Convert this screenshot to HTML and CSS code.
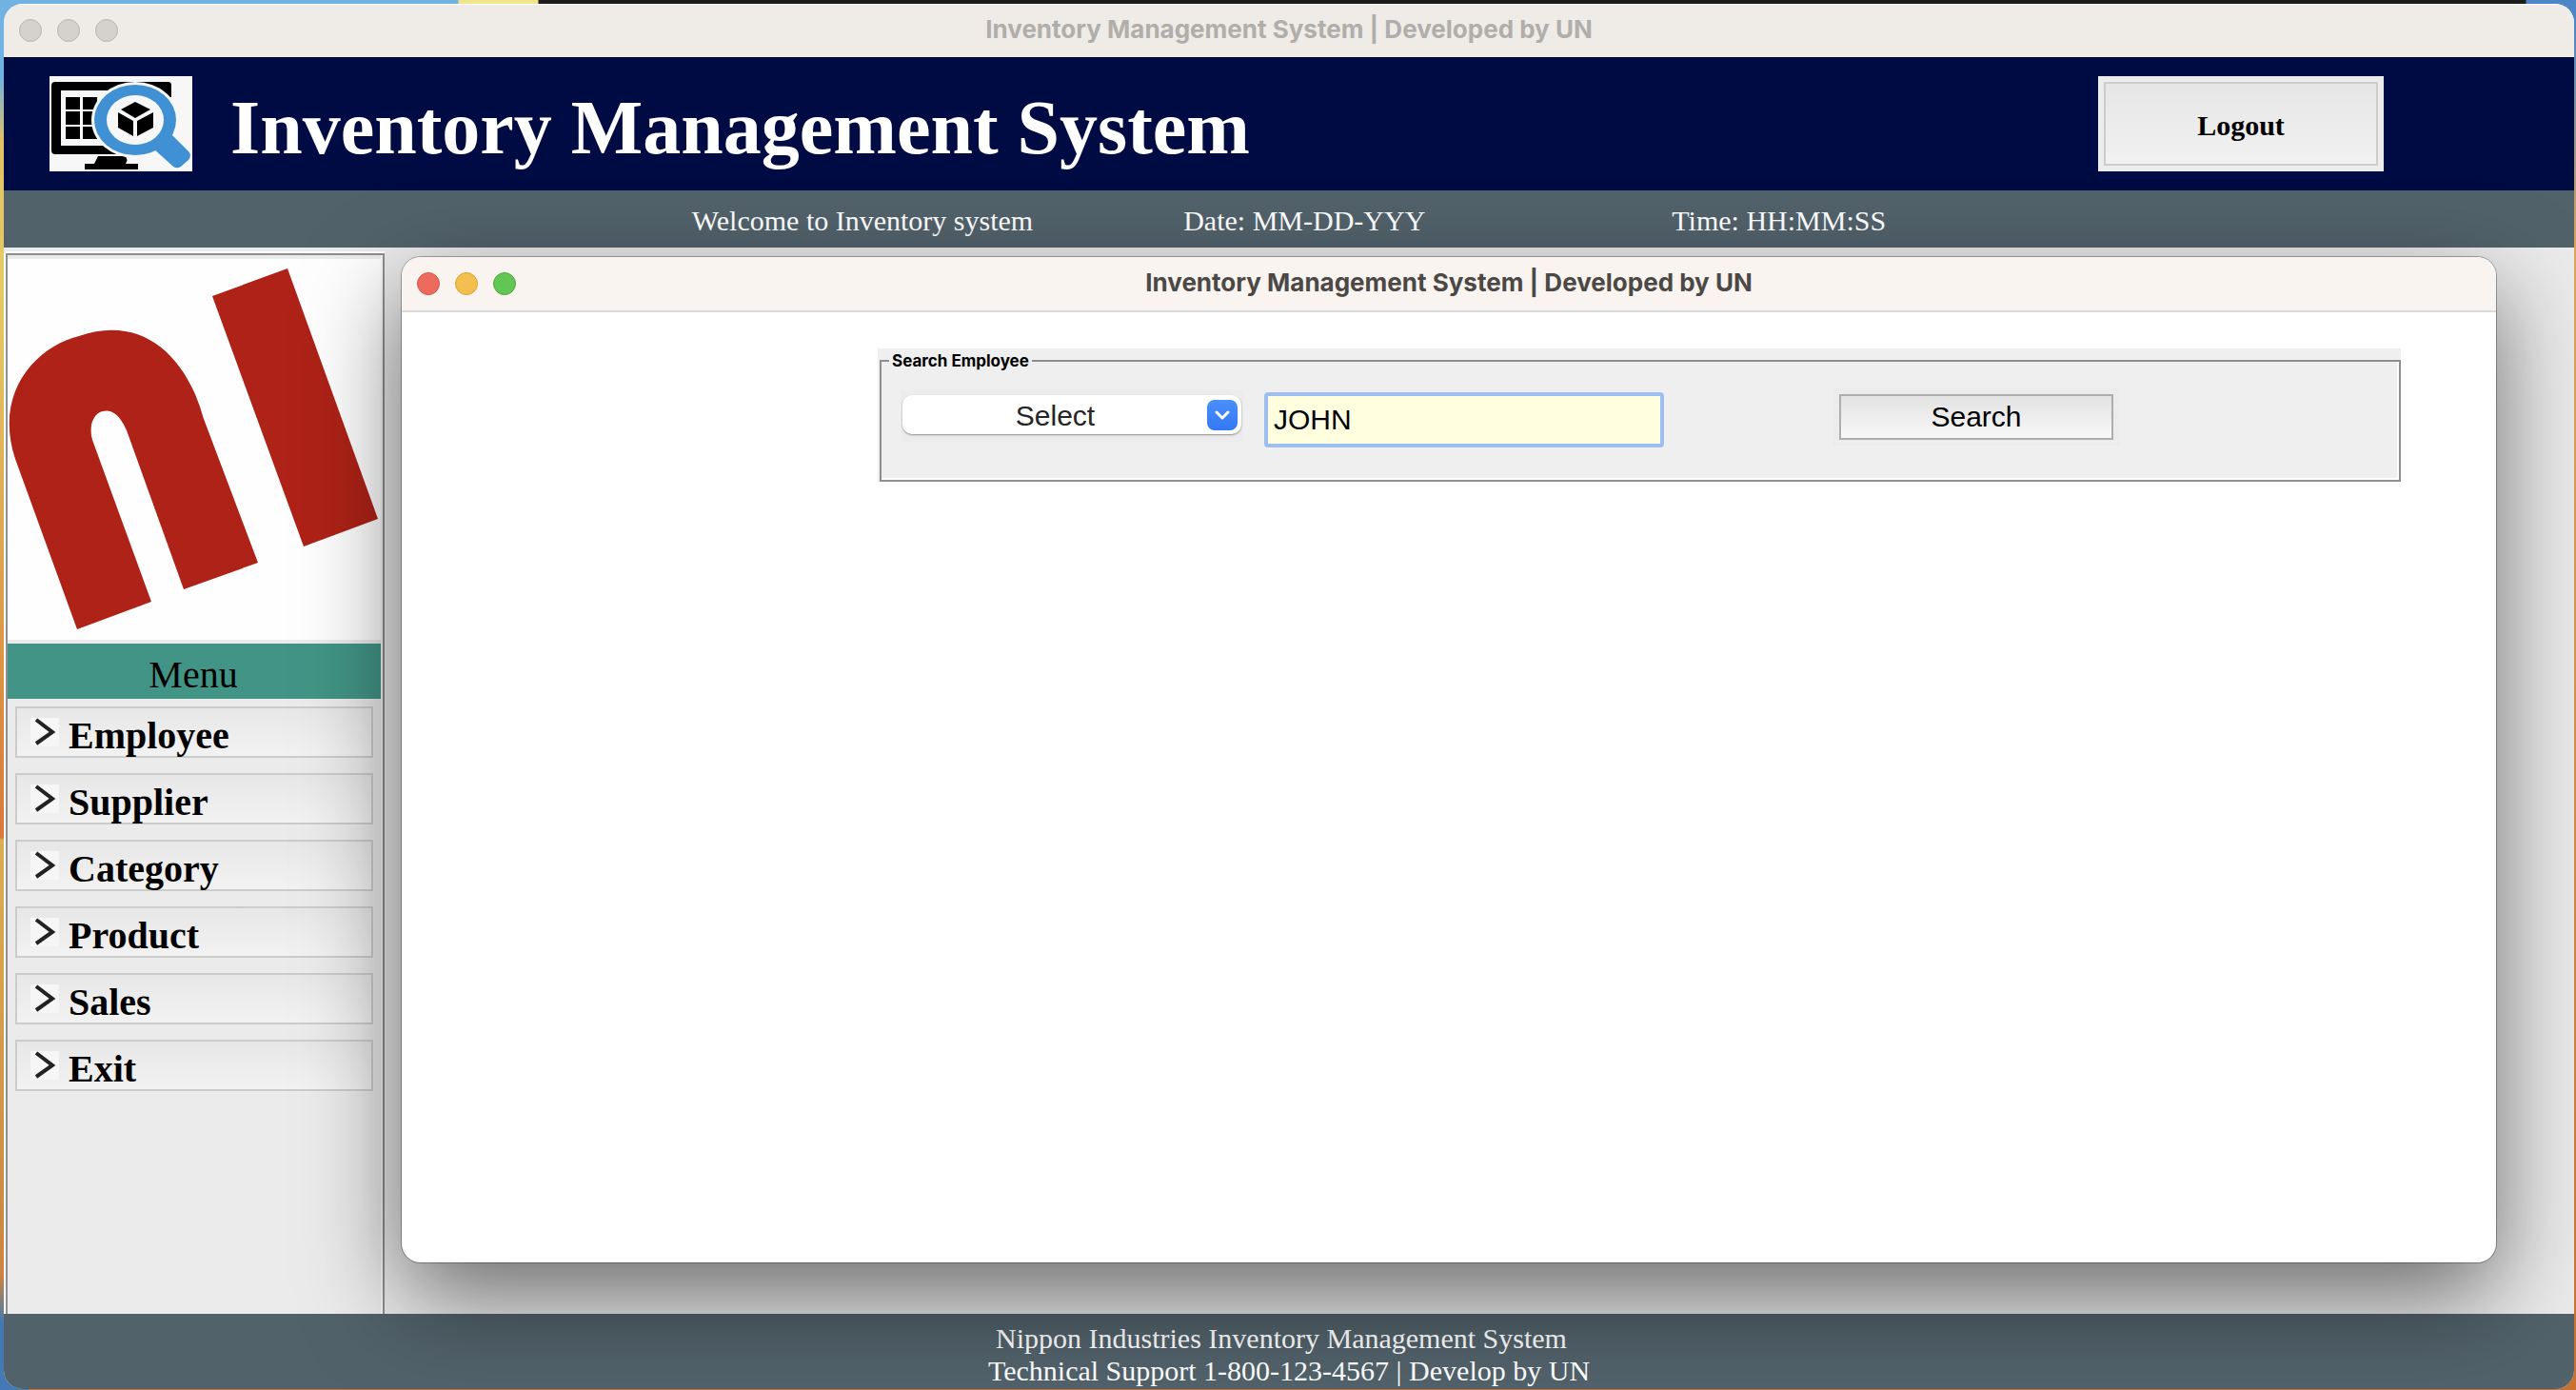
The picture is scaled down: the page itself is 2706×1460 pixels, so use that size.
FILE: index.html
```html
<!DOCTYPE html>
<html lang="en">
<head>
<meta charset="utf-8">
<title>Inventory Management System | Developed by UN</title>
<link rel="stylesheet" href="styles.css">
</head>
<body>
<div class="wallpaper"></div>
<div class="window">
  <div class="titlebar titlebar-inactive">
    <div class="lights"><span class="light"></span><span class="light"></span><span class="light"></span></div>
    <div class="titlebar-text">Inventory Management System | Developed by UN</div>
  </div>
  <header class="header">
    <svg class="header-logo" viewBox="0 0 150 100" aria-hidden="true">
      <rect width="150" height="100" fill="#f7f7f7"/>
      <rect x="2" y="6" width="126" height="76" rx="4"/>
      <rect x="12" y="15" width="106" height="58" fill="#f7f7f7"/>
      <path d="M17 22h15v13H17zM35 22h15v13H35zM17 37h15v14H17zM35 37h15v14H35zM17 53h15v13H17zM35 53h15v13H35z"/>
      <path d="M51 84h29l3 8h10v6H37v-6h10z"/>
      <path d="M112 22h18v70H80z" fill="#f7f7f7"/>
      <ellipse cx="90" cy="46" rx="46" ry="40" fill="#f7f7f7"/>
      <path d="M100 6h24q4 0 4 4v12L118 12z"/>
      <ellipse cx="90" cy="46" rx="45" ry="39" fill="#f7f7f7"/>
      <path d="M128 61L146 79Q150 83 146 88L138 95Q133 98 129 94L109 76z" fill="#4091d4"/>
      <ellipse cx="90" cy="46" rx="43" ry="37" fill="#4091d4"/>
      <ellipse cx="90" cy="46" rx="30" ry="26" fill="#f7f7f7"/>
      <path d="M90 27l16 8-16 9-15-9zM72 38l16 9v16l-16-9zM109 38L92 47v16l17-9z"/>
    </svg>
    <h1 class="header-title">Inventory Management System</h1>
    <button class="tk-button logout" type="button"><span class="tk-face">Logout</span></button>
  </header>
  <div class="clock">
    <span>Welcome to Inventory system</span>
    <span class="clock-date">Date: MM-DD-YYY</span>
    <span>Time: HH:MM:SS</span>
  </div>
  <div class="workspace">
    <nav class="sidebar">
      <div class="brand">
        <svg class="brand-logo" viewBox="0 0 392 400" preserveAspectRatio="none" aria-hidden="true">
          <path fill="#ae2217" d="M215 39L294 10L389 273L311 302zM73 389L8 210C-15 140 30 92 75 81C130 62 173 88 197 142Q202 154 206 168L263 319L185 347L125 180C115 157 104 159 100 160C90 162 85 175 89 190L151 360z"/>
        </svg>
      </div>
      <div class="menu-title">Menu</div>
      <ul class="menu">
        <li><button class="menu-item" type="button"><svg class="chevron" viewBox="0 0 30 30" aria-hidden="true"><path d="M6 2L23 15L6 27"/></svg>Employee</button></li>
        <li><button class="menu-item" type="button"><svg class="chevron" viewBox="0 0 30 30" aria-hidden="true"><path d="M6 2L23 15L6 27"/></svg>Supplier</button></li>
        <li><button class="menu-item" type="button"><svg class="chevron" viewBox="0 0 30 30" aria-hidden="true"><path d="M6 2L23 15L6 27"/></svg>Category</button></li>
        <li><button class="menu-item" type="button"><svg class="chevron" viewBox="0 0 30 30" aria-hidden="true"><path d="M6 2L23 15L6 27"/></svg>Product</button></li>
        <li><button class="menu-item" type="button"><svg class="chevron" viewBox="0 0 30 30" aria-hidden="true"><path d="M6 2L23 15L6 27"/></svg>Sales</button></li>
        <li><button class="menu-item" type="button"><svg class="chevron" viewBox="0 0 30 30" aria-hidden="true"><path d="M6 2L23 15L6 27"/></svg>Exit</button></li>
      </ul>
    </nav>
    <section class="dialog">
      <div class="titlebar titlebar-active">
        <div class="lights"><span class="light red"></span><span class="light yellow"></span><span class="light green"></span></div>
        <div class="titlebar-text">Inventory Management System | Developed by UN</div>
      </div>
      <form class="search">
        <fieldset class="search-frame">
          <legend>Search Employee</legend>
          <div class="search-row">
            <div class="select-wrap">
              <select class="search-by" aria-label="Search by"><option>Select</option></select>
              <svg class="select-arrow" viewBox="0 0 32 32" aria-hidden="true"><path d="M10 13L16 19L22 13"/></svg>
            </div>
            <input class="search-text" type="text" value="JOHN" aria-label="Search text">
            <button class="tk-button search-button" type="button"><span class="tk-face">Search</span></button>
          </div>
        </fieldset>
      </form>
    </section>
  </div>
  <footer class="footer">
    <div class="footer-company">Nippon Industries Inventory Management System</div>
    <div>Technical Support 1-800-123-4567 | Develop by UN</div>
  </footer>
</div>
</body>
</html>
```
FILE: styles.css
```css
* { box-sizing: border-box; }
body {
  margin: 0;
  min-height: 100vh;
  padding: 4px 2px 1px 4px;
  display: flex;
  position: relative;
  font-family: "Liberation Serif", "Times New Roman", serif;
  font-size: 30px;
  color: #000;
  background: linear-gradient(#4d86c6 0, #4d86c6 30px, #dca456 260px, #c8702f 100%);
}
/* desktop showing behind the window */
.wallpaper {
  position: absolute;
  inset: 0;
  background:
    linear-gradient(90deg, #70b2e2 0, #70b2e2 481px, #f0e48c 482px, #f0e48c 565px, #1c1c1c 566px, #1c1c1c calc(100% - 53px), #4d86c6 calc(100% - 52px)) 0 0 / 100% 5px no-repeat,
    linear-gradient(#70b2e2 0, #70b2e2 80px, #e2c264 150px, #e5cb66 300px, #dc9442 700px, #d9783a 880px, #dcae50 882px, #cc8440 1340px, #4379b4 1390px) 0 0 / 30px 100% no-repeat;
}
.window {
  position: relative;
  flex: 1;
  display: flex;
  flex-direction: column;
  background: #ebebeb;
  border-radius: 20px;
  overflow: hidden;
}
.titlebar {
  position: relative;
  display: flex;
  align-items: center;
  justify-content: center;
  font: bold 26px/32px Inter, "Noto Sans", sans-serif;
}
.titlebar-text { padding-bottom: 2px; }
.titlebar-inactive {
  height: 56px;
  color: #b0aeab;
  background: #efebe6;
  box-shadow: inset 0 1px #fff;
}
.titlebar-active {
  height: 58px;
  color: #4b4846;
  background: #f9f4ef;
  border-bottom: 2px solid #dcdad8;
  border-radius: 20px 20px 0 0;
}
.lights {
  position: absolute;
  left: 16px;
  display: flex;
  gap: 16px;
}
.light {
  width: 24px;
  height: 24px;
  border-radius: 50%;
  background: #d5d1cd;
  border: 1px solid #b9b5b1;
}
.red { background: #ed6a5f; border-color: #d5554b; }
.yellow { background: #f5bf50; border-color: #d8a13c; }
.green { background: #62c655; border-color: #4fa73f; }
.header {
  display: flex;
  align-items: center;
  height: 140px;
  padding: 0 200px 0 48px;
  background: #010b43;
  box-shadow: inset 0 1px #00052a;
}
.header-logo { width: 150px; height: 100px; }
.header-title {
  margin: 0 auto 0 40px;
  padding-top: 8px;
  font-size: 80px;
  line-height: 92px;
  color: #fff;
}
.tk-button {
  padding: 6px;
  border: 0;
  background: #ececec;
  color: #000;
}
.tk-face {
  display: flex;
  align-items: center;
  justify-content: center;
  height: 100%;
  border: 2px solid #ccc;
  background: linear-gradient(#e6e6e6, #f1f1f1);
}
.logout {
  width: 300px;
  height: 100px;
  font: bold 30px/34px "Liberation Serif", serif;
}
.logout .tk-face { padding-top: 4px; }
.clock {
  display: flex;
  align-items: center;
  justify-content: center;
  height: 60px;
  padding-top: 4px;
  color: #fff;
  background: #52626b;
}
.clock-date { margin: 0 259px 0 158px; }
.workspace {
  flex: 1;
  display: flex;
  align-items: flex-start;
}
.sidebar {
  align-self: stretch;
  flex: none;
  width: 398px;
  margin: 6px 0 0 2px;
  padding: 4px 2px 0 0;
  border: 2px solid #8f8f8f;
  border-bottom: 0;
  box-shadow: inset -2px 0 #f7f7f7, 0 -2px #fff, -2px 0 #fff;
}
.brand { height: 400px; margin-bottom: 4px; background: #fefefe; }
.brand-logo { display: block; width: 100%; height: 100%; }
.menu-title {
  height: 58px;
  padding-right: 2px;
  font-size: 40px;
  line-height: 66px;
  text-align: center;
  background: #429586;
}
.menu {
  list-style: none;
  margin: 0;
  padding: 8px;
  display: grid;
  gap: 16px;
}
.menu li { display: flex; }
.menu-item {
  flex: 1;
  display: flex;
  align-items: flex-start;
  gap: 10px;
  height: 54px;
  padding: 10px 14px 0;
  border: 2px solid #ccc;
  background: linear-gradient(#e7e7e7, #f2f2f2);
  color: #000;
  font: bold 40px/38px "Liberation Serif", serif;
}
.chevron { width: 30px; height: 30px; background: #f6f6f6; }
.chevron path { fill: none; stroke: #222; stroke-width: 4px; }
.dialog {
  flex: 1;
  position: relative;
  min-height: 1056px;
  margin: 10px 82px 0 18px;
  background: #fff;
  border-radius: 20px;
  box-shadow: 0 0 0 1px rgba(0, 0, 0, .3), 0 36px 100px rgba(0, 0, 0, .55);
}
.search {
  margin: 38px 100px 0 500px;
  padding-left: 2px;
  background: #efefef;
}
.search-frame {
  margin: 0;
  padding: 18px 20px 36px;
  min-width: 0;
  height: 140px;
  border: 2px solid #8f8f8f;
  box-shadow: inset -2px -2px #fff;
}
.search-frame legend {
  margin-left: -12px;
  padding: 0 3px;
  font: bold 17px/26px Inter, sans-serif;
}
.search-row { display: flex; align-items: flex-start; }
.select-wrap {
  position: relative;
  width: 360px;
  height: 54px;
  padding: 5px 2px 8px;
  background: #ececec;
  margin-right: 22px;
}
.search-by {
  appearance: none;
  display: block;
  width: 100%;
  height: 41px;
  padding: 3px 35px 0 0;
  border: 0;
  border-radius: 10px;
  background: #fff;
  box-shadow: 0 1px 2px rgba(0, 0, 0, .4);
  color: #262626;
  font: 30px/36px "Liberation Sans", Arial, sans-serif;
  text-align: center;
  text-align-last: center;
}
.select-arrow {
  position: absolute;
  right: 6px;
  top: 10px;
  width: 32px;
  height: 32px;
  border-radius: 8px;
  background: linear-gradient(#4a90f8, #3478f6);
}
.select-arrow path { fill: none; stroke: #fff; stroke-width: 3px; stroke-linecap: round; stroke-linejoin: round; }
.search-text {
  width: 420px;
  height: 58px;
  margin-top: 2px;
  padding: 0 6px;
  border: 4px solid #9dbff0;
  border-radius: 4px;
  background: #ffffe0;
  color: #000;
  font: 30px/36px "Liberation Sans", Arial, sans-serif;
}
.search-button {
  align-self: flex-start;
  width: 300px;
  height: 60px;
  margin-left: 178px;
  margin-top: -2px;
  font: 30px/34px "Liberation Sans", Arial, sans-serif;
}
.search-button .tk-face { border-color: #adadad; background: linear-gradient(#e2e2e2, #f8f8f8); }
.footer {
  padding: 9px 0 2px;
  text-align: center;
  line-height: 34px;
  color: #fff;
  background: #52626b;
}
.footer-company { padding-right: 16px; }
```
